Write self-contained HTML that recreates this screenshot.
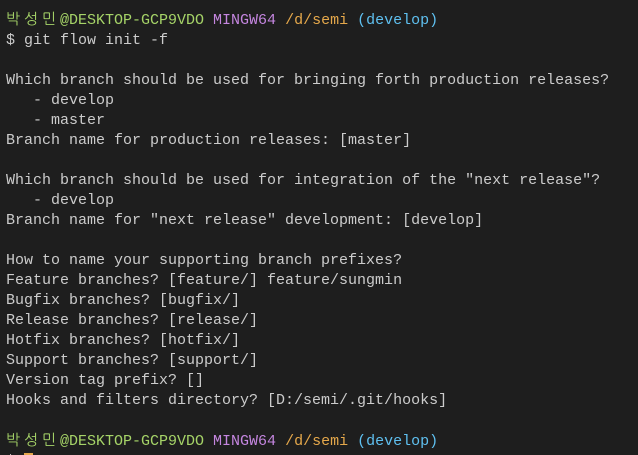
<!DOCTYPE html><html style="overflow:hidden;height:455px"><head><meta charset="utf-8"><style>
body{margin:0;background:#1e1e1e;width:638px;height:455px;overflow:hidden}
pre{margin:0;padding:10px 0 0 6px;font-family:"Liberation Mono","NanumGothic",monospace;font-size:15px;line-height:20px;color:#cccccc}
.k{display:inline-block;width:18px;font-family:"NanumGothic","Noto Sans CJK KR",sans-serif;color:#a6d468}
.g{color:#a6d468}.m{color:#c586e0}.y{color:#e5a84b}.c{color:#5fc0f0}
.cur{background:#e5a84b;color:#e5a84b}
</style></head><body><pre><span class="k">박</span><span class="k">성</span><span class="k">민</span><span class="g">@DESKTOP-GCP9VDO</span> <span class="m">MINGW64</span> <span class="y">/d/semi</span> <span class="c">(develop)</span>
$ git flow init -f

Which branch should be used for bringing forth production releases?
   - develop
   - master
Branch name for production releases: [master]

Which branch should be used for integration of the "next release"?
   - develop
Branch name for "next release" development: [develop]

How to name your supporting branch prefixes?
Feature branches? [feature/] feature/sungmin
Bugfix branches? [bugfix/]
Release branches? [release/]
Hotfix branches? [hotfix/]
Support branches? [support/]
Version tag prefix? []
Hooks and filters directory? [D:/semi/.git/hooks]

<span class="k">박</span><span class="k">성</span><span class="k">민</span><span class="g">@DESKTOP-GCP9VDO</span> <span class="m">MINGW64</span> <span class="y">/d/semi</span> <span class="c">(develop)</span>
$ <span class="cur">_</span></pre></body></html>
